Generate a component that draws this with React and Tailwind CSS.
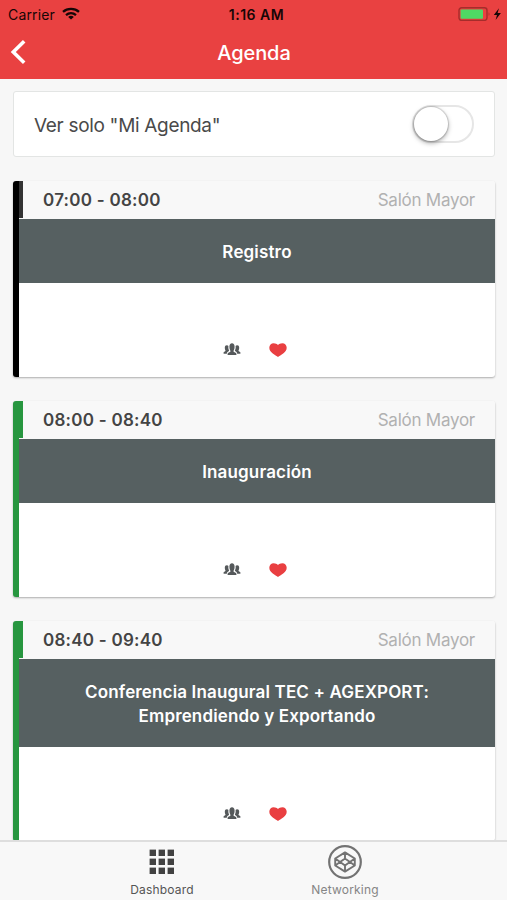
const SESSIONS = [
  {
    time: '07:00 - 08:00',
    room: 'Salón Mayor',
    title: ['Registro'],
    edge: 'border-black',
    strip: 'bg-[#333333]',
  },
  {
    time: '08:00 - 08:40',
    room: 'Salón Mayor',
    title: ['Inauguración'],
    edge: 'border-[#27963f]',
    strip: 'bg-[#27963f]',
  },
  {
    time: '08:40 - 09:40',
    room: 'Salón Mayor',
    title: ['Conferencia Inaugural TEC + AGEXPORT:', 'Emprendiendo y Exportando'],
    edge: 'border-[#27963f]',
    strip: 'bg-[#27963f]',
  },
]

// ─── Icons ───────────────────────────────────────────────────────────────────
function WifiIcon() {
  return (
    <svg viewBox="0 0 18 13" className="w-[18px] h-[13px] -mt-px" fill="none" stroke="#160606" strokeWidth="2.3">
      <path d="M1 4.9C5.4.9 12.6.9 17 4.9" />
      <path d="M4 8.1c2.9-2.5 7.1-2.5 10 0" />
      <path d="M9 12.6 6.2 9.9c1.6-1.4 4-1.4 5.6 0z" fill="#160606" stroke="none" />
    </svg>
  )
}

function BatteryIcon() {
  return (
    <svg viewBox="0 0 44 14" className="w-[44px] h-[14px] -mt-px">
      <rect x="1" y=".8" width="28" height="12.6" rx="2.6" fill="none" stroke="#a52d2b" strokeWidth="1.4" />
      <rect x="2.6" y="2.4" width="22.4" height="9.4" rx="1" fill="#4fd964" />
      <path d="M30.6 5.2c1.1.4 1.1 3.2 0 3.6z" fill="#a52d2b" />
      <path d="M41 1.2 35.8 7.9h3.2l-1.4 5 5.3-6.8h-3.3z" fill="#160606" />
    </svg>
  )
}

function PeopleIcon() {
  return (
    <svg viewBox="0 0 18 12" className="w-[18px] h-3" fill="#55595b">
      <path d="M.6 10.800V9.600c0-.8 1.600-1 1.900-1.500.2-.5-.7-1.400-.7-3.300 0-1.700.8-2.500 2-2.500.8 0 1.300.3 1.600.8-.2 2 0 3.300.7 4.300-.3 1-2.300 1.200-2.300 3.400z" />
      <path d="M17.400 10.800V9.600c0-.8-1.600-1-1.900-1.500-.2-.5.7-1.400.7-3.300 0-1.700-.8-2.500-2-2.500-.8 0-1.300.3-1.600.8.2 2 0 3.300-.7 4.300.3 1 2.300 1.200 2.300 3.400z" />
      <path d="M4.600 12v-1.300c0-1.200 2.600-1.500 2.900-2.300.2-.7-1.100-1.800-1.100-4.400C6.400 1.500 7.400.3 9 .3s2.600 1.200 2.600 3.700c0 2.600-1.300 3.700-1.100 4.400.3.8 2.900 1.100 2.900 2.300V12z" />
    </svg>
  )
}

function HeartIcon() {
  return (
    <svg viewBox="0 0 18 14" className="w-[18px] h-[14px]" fill="#e93f41">
      <path d="M9 14C6.7 12 .3 9.4.3 4.7.3 2.1 2.2.2 4.7.2 6.5.2 8 .9 9 2 10 .9 11.5.2 13.3.2c2.5 0 4.4 1.9 4.4 4.5C17.7 9.4 11.3 12 9 14z" />
    </svg>
  )
}

function GridIcon() {
  return (
    <svg viewBox="0 0 26 26" className="w-[26px] h-[26px]" fill="#424242">
      {[0.6, 9.6, 18.6].map(y =>
        [0.6, 9.6, 18.6].map(x => <rect key={`${x}-${y}`} x={x} y={y} width="6.4" height="6.4" />)
      )}
    </svg>
  )
}

function NetworkIcon() {
  return (
    <svg viewBox="0 0 36 34" className="w-9 h-[34px]" fill="none" stroke="#737373" strokeLinejoin="round">
      <circle cx="18" cy="17" r="15.8" strokeWidth="2.2" />
      <path
        d="M18 7.4 27.8 13.5v7L18 26.6 8.2 20.5v-7zM18 7.4v6.100M18 20.500v6.100M8.200 13.500 18 20.500l9.800-7M8.200 20.500 18 13.500l9.800 7"
        strokeWidth="1.9"
      />
    </svg>
  )
}

// ─── Session card ────────────────────────────────────────────────────────────
function SessionCard({ session }) {
  return (
    <div
      className={`shrink-0 bg-white rounded-[3px] overflow-hidden border-l-6 shadow-[0_1px_2px_rgba(0,0,0,0.3)] ${session.edge}`}
    >
      <div className="flex items-center h-[38px] bg-[#f8f8f8] pr-5">
        <div className={`w-1 h-[37px] self-start shrink-0 ${session.strip}`} />
        <span className="ml-5 mt-0.5 flex-1 text-[17px] font-semibold tracking-[0.25px] text-[#444444]">
          {session.time}
        </span>
        <span className="mt-0.5 text-[17px] tracking-[-0.25px] text-[#b1b1b1]">{session.room}</span>
      </div>
      <div className="bg-[#566061] pt-[21px] pb-[19px] text-center text-[17px] leading-6 font-semibold tracking-[0.15px] text-white">
        {session.title.map(line => (
          <p key={line}>{line}</p>
        ))}
      </div>
      <div className="flex h-[94px] items-start justify-center gap-7 pt-[60px] pr-[5px]">
        <PeopleIcon />
        <HeartIcon />
      </div>
    </div>
  )
}

export default function App() {
  return (
    <div className="flex h-[900px] w-full flex-col overflow-hidden bg-[#f7f7f7] font-['Inter',sans-serif]">
      <header className="h-[79px] shrink-0 bg-[#e94141]">
        <div className="grid h-7 grid-cols-3 items-center pl-2 pr-[5px] text-[14px] text-[#160606]">
          <div className="flex items-center gap-[7px]">
            <span className="tracking-[0.15px]">Carrier</span>
            <WifiIcon />
          </div>
          <span className="pl-[3px] text-center font-semibold tracking-[0.5px]">1:16 AM</span>
          <div className="flex justify-end">
            <BatteryIcon />
          </div>
        </div>
        <div className="grid h-12 grid-cols-[40px_1fr_40px] items-center">
          <svg viewBox="0 0 16 24" className="ml-2.5 w-4 h-6" fill="none" stroke="white" strokeWidth="3.6">
            <path d="M14.2 1.3 3.3 12l10.9 10.7" />
          </svg>
          <h1 className="pl-px pt-px text-center text-[20px] font-medium tracking-[-0.1px] text-white">Agenda</h1>
        </div>
      </header>

      <main className="flex min-h-0 flex-1 flex-col gap-6 overflow-hidden pl-[13px] pr-3 pt-3">
        <div className="flex h-[66px] shrink-0 items-center justify-between border border-[#e3e5e4] bg-white pl-5 pr-5 rounded-[3px]">
          <span className="pt-1 text-[19px] tracking-[-0.32px] text-[#4a4a4a]">Ver solo "Mi Agenda"</span>
          <div className="flex h-[38px] w-[62px] items-center rounded-full border-2 border-[#e6e6e6]">
            <div className="size-[34px] shrink-0 rounded-full bg-white shadow-[0_2px_5px_rgba(0,0,0,0.35),0_0_1px_1px_rgba(0,0,0,0.15)]" />
          </div>
        </div>
        {SESSIONS.map(s => (
          <SessionCard key={s.time} session={s} />
        ))}
      </main>

      <nav className="flex h-[60px] shrink-0 justify-center border-t-2 border-[#dedede] bg-[#f8f8f8] text-[12px] tracking-[0.2px]">
        <div className="flex w-[183px] flex-col items-center text-[#555555]">
          <div className="flex h-10 items-center">
            <GridIcon />
          </div>
          <span className="leading-4">Dashboard</span>
        </div>
        <div className="flex w-[183px] flex-col items-center text-[#858585]">
          <div className="flex h-10 items-center">
            <NetworkIcon />
          </div>
          <span className="leading-4">Networking</span>
        </div>
      </nav>
    </div>
  )
}
